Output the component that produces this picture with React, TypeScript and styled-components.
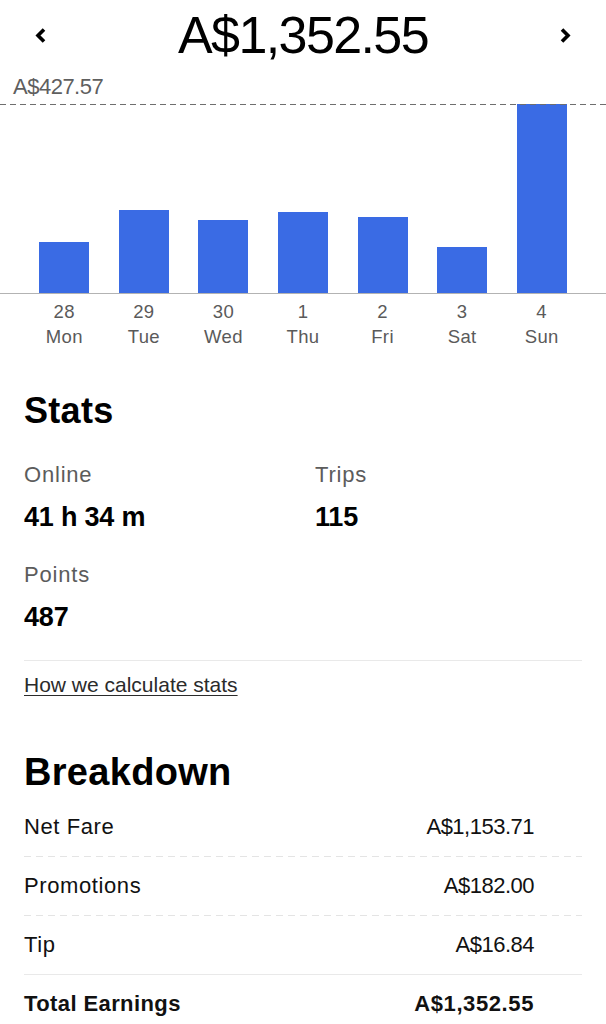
import React from "react";
import styled, { createGlobalStyle } from "styled-components";

const GlobalStyle = createGlobalStyle`
  html, body {
    margin: 0;
    padding: 0;
    background: #ffffff;
  }
  body {
    font-family: "Liberation Sans", Arial, sans-serif;
    color: #000;
    -webkit-font-smoothing: antialiased;
  }
  * { box-sizing: border-box; }
`;

const Page = styled.div`
  width: 606px;
  min-height: 1024px;
  background: #fff;
  overflow: hidden;
`;

const Header = styled.header`
  display: grid;
  grid-template-columns: 1fr auto 1fr;
  align-items: center;
  padding: 4px 34px 0;
  height: 66px;
`;

const NavButton = styled.button<{ $side: "left" | "right" }>`
  justify-self: ${(p) => (p.$side === "left" ? "start" : "end")};
  display: flex;
  align-items: center;
  justify-content: center;
  width: 13px;
  height: 17px;
  padding: 0;
  border: 0;
  background: none;
  cursor: pointer;
`;

const Total = styled.h1`
  margin: 0;
  font-size: 52px;
  line-height: 60px;
  font-weight: 400;
  letter-spacing: -1.6px;
  color: #000;
`;

const Chart = styled.section`
  margin-top: 8px;
`;

const MaxLabel = styled.div`
  padding-left: 13px;
  font-size: 22px;
  line-height: 26px;
  letter-spacing: -0.5px;
  color: #5f5f5f;
  margin-bottom: 4px;
`;

const Plot = styled.div`
  position: relative;
  display: grid;
  grid-template-columns: repeat(7, 1fr);
  align-items: end;
  height: 190px;
  padding: 0 24.5px;
  border-bottom: 1px solid #b3b3b3;

  &::after {
    content: "";
    position: absolute;
    left: 0;
    right: 0;
    top: 0;
    height: 1px;
    background-image: repeating-linear-gradient(
      to right,
      #6e6e6e 0 6px,
      transparent 6px 10px
    );
  }
`;

const BarCell = styled.div`
  display: flex;
  justify-content: center;
  align-items: flex-end;
  height: 100%;
`;

const Bar = styled.div`
  width: 50px;
  background: #3a6be4;
`;

const Labels = styled.div`
  display: grid;
  grid-template-columns: repeat(7, 1fr);
  padding: 5px 24.5px 0;
`;

const DayLabel = styled.div`
  text-align: center;
  font-size: 18.5px;
  line-height: 25px;
  color: #5a5a5a;
  letter-spacing: 0.4px;
`;

const Section = styled.section<{ $top: number }>`
  padding: 0 24px;
  margin-top: ${(p) => p.$top}px;
`;

const Heading = styled.h2<{ $size: number; $lh: number }>`
  margin: 0;
  font-size: ${(p) => p.$size}px;
  line-height: ${(p) => p.$lh}px;
  font-weight: 700;
  color: #000;
  letter-spacing: 0.3px;
`;

const StatsGrid = styled.div`
  display: grid;
  grid-template-columns: 291px 1fr;
  row-gap: 27px;
  margin-top: 28px;
`;

const Stat = styled.div`
  display: flex;
  flex-direction: column;
  gap: 11px;
`;

const StatLabel = styled.div`
  font-size: 22px;
  line-height: 28px;
  color: #5c5c5c;
  letter-spacing: 0.8px;
`;

const StatValue = styled.div`
  font-size: 27px;
  line-height: 34px;
  font-weight: 700;
  color: #000;
  letter-spacing: -0.2px;
`;

const Divider = styled.hr`
  margin: 26px 0 0;
  border: 0;
  height: 1px;
  background: #e9e9e9;
`;

const Link = styled.a`
  display: inline-block;
  margin-top: 11px;
  font-size: 21px;
  line-height: 26px;
  color: #2b2b2b;
  text-decoration: underline;
  text-decoration-thickness: 1px;
  text-underline-offset: 3px;
  cursor: pointer;
`;

const Rows = styled.div`
  margin-top: 3px;
  display: flex;
  flex-direction: column;
`;

const Row = styled.div<{ $sep: "dashed" | "solid" | "none" }>`
  display: flex;
  justify-content: space-between;
  align-items: center;
  padding: 15px 48px 15px 0;
  ${(p) =>
    p.$sep === "dashed"
      ? `background-image: repeating-linear-gradient(to right, #e4e4e4 0 7px, transparent 7px 12px);
         background-size: 100% 1px;
         background-repeat: no-repeat;
         background-position: left bottom;
         padding-bottom: 16px;`
      : p.$sep === "solid"
      ? `border-bottom: 1px solid #e9e9e9;`
      : ``}
`;

const RowLabel = styled.span<{ $bold?: boolean }>`
  font-size: 22px;
  line-height: 28px;
  font-weight: ${(p) => (p.$bold ? 700 : 400)};
  letter-spacing: ${(p) => (p.$bold ? "0.4px" : "0.6px")};
  color: #111;
`;

const RowValue = styled.span<{ $bold?: boolean }>`
  font-size: 22px;
  line-height: 28px;
  font-weight: ${(p) => (p.$bold ? 700 : 400)};
  letter-spacing: ${(p) => (p.$bold ? "0.6px" : "-0.5px")};
  color: #111;
`;

const Chevron = ({ dir }: { dir: "left" | "right" }) => (
  <svg width="13" height="17" viewBox="0 0 13 17" aria-hidden="true">
    <polyline
      points={dir === "left" ? "10,2.5 4,8.5 10,14.5" : "3,2.5 9,8.5 3,14.5"}
      fill="none"
      stroke="#000"
      strokeWidth="3.6"
      strokeLinecap="butt"
      strokeLinejoin="miter"
    />
  </svg>
);

const days = [
  { date: "28", day: "Mon", value: 114.5 },
  { date: "29", day: "Tue", value: 187.2 },
  { date: "30", day: "Wed", value: 164.6 },
  { date: "1", day: "Thu", value: 184.3 },
  { date: "2", day: "Fri", value: 171.4 },
  { date: "3", day: "Sat", value: 103.0 },
  { date: "4", day: "Sun", value: 427.57 },
];

const MAX = 427.57;
const PLOT_H = 189;

const stats = [
  { label: "Online", value: "41 h 34 m" },
  { label: "Trips", value: "115" },
  { label: "Points", value: "487" },
];

const breakdown: { label: string; value: string; sep: "dashed" | "solid" | "none"; bold?: boolean }[] = [
  { label: "Net Fare", value: "A$1,153.71", sep: "dashed" },
  { label: "Promotions", value: "A$182.00", sep: "dashed" },
  { label: "Tip", value: "A$16.84", sep: "solid" },
  { label: "Total Earnings", value: "A$1,352.55", sep: "none", bold: true },
];

export default function App() {
  return (
    <Page>
      <GlobalStyle />
      <Header>
        <NavButton $side="left" aria-label="Previous week">
          <Chevron dir="left" />
        </NavButton>
        <Total>A$1,352.55</Total>
        <NavButton $side="right" aria-label="Next week">
          <Chevron dir="right" />
        </NavButton>
      </Header>

      <Chart>
        <MaxLabel>A$427.57</MaxLabel>
        <Plot>
          {days.map((d) => (
            <BarCell key={d.day}>
              <Bar style={{ height: `${Math.round((d.value / MAX) * PLOT_H)}px` }} />
            </BarCell>
          ))}
        </Plot>
        <Labels>
          {days.map((d) => (
            <DayLabel key={d.day}>
              {d.date}
              <br />
              {d.day}
            </DayLabel>
          ))}
        </Labels>
      </Chart>

      <Section $top={40}>
        <Heading $size={36} $lh={44}>Stats</Heading>
        <StatsGrid>
          {stats.map((s) => (
            <Stat key={s.label}>
              <StatLabel>{s.label}</StatLabel>
              <StatValue>{s.value}</StatValue>
            </Stat>
          ))}
        </StatsGrid>
        <Divider />
        <Link>How we calculate stats</Link>
      </Section>

      <Section $top={51}>
        <Heading $size={38} $lh={46}>Breakdown</Heading>
        <Rows>
          {breakdown.map((r) => (
            <Row key={r.label} $sep={r.sep}>
              <RowLabel $bold={r.bold}>{r.label}</RowLabel>
              <RowValue $bold={r.bold}>{r.value}</RowValue>
            </Row>
          ))}
        </Rows>
      </Section>
    </Page>
  );
}
